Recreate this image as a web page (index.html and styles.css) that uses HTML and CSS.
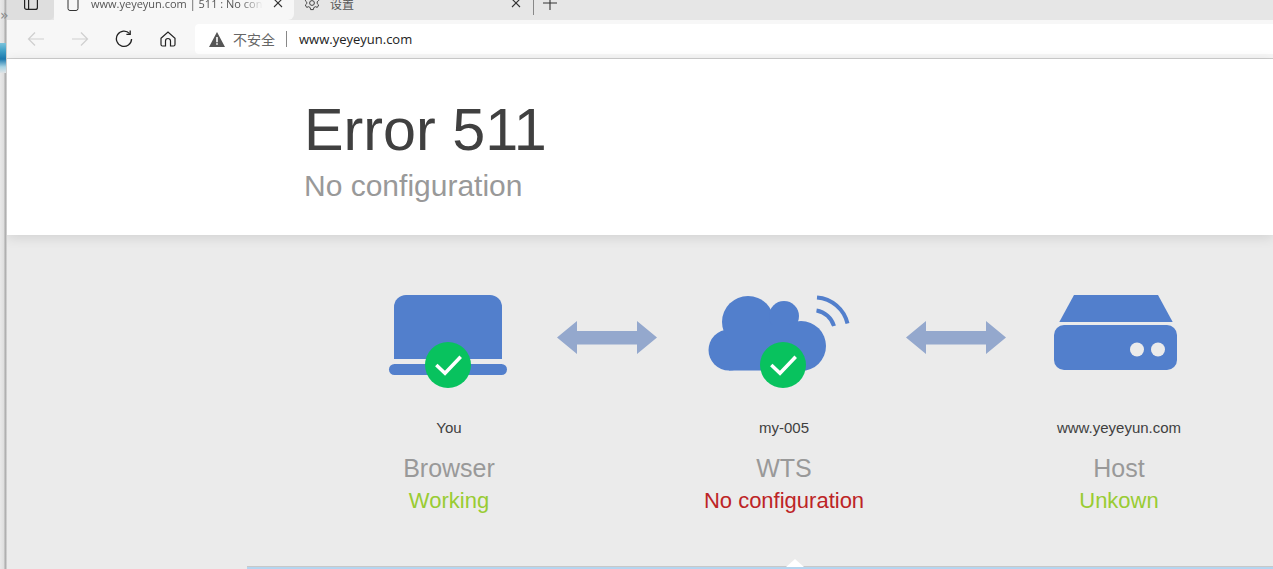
FILE: index.html
```html
<!DOCTYPE html>
<html lang="en">
<head>
    <meta charset="UTF-8">
    <meta name="viewport" content="width=device-width, initial-scale=1.0">
    <title>www.yeyeyun.com | 511 : No configuration</title>
    <link rel="stylesheet" href="styles.css">
</head>
<body>
    <div class="desk-strip">
        <span class="desk-more">»</span>
        <div class="desk-image"></div>
    </div>
    <div class="browser">
        <div class="tab-strip">
            <div class="sidebar-button">
                <svg width="14" height="14" viewBox="0 0 14 14" fill="none" stroke="#222" stroke-width="1.2"><rect x="0.6" y="0.6" width="12.8" height="12.8" rx="2"/><path d="M4.6 1v12"/></svg>
            </div>
            <div class="tab tab-active">
                <svg class="tab-icon" width="12" height="16" viewBox="0 0 12 16" fill="none" stroke="#333" stroke-width="1"><path d="M1 2.500a2 2 0 0 1 2-2h4l4 4v9a2 2 0 0 1-2 2H3a2 2 0 0 1-2-2z"/></svg>
                <span class="tab-title">www.yeyeyun.com | 511 : No configuration</span>
                <svg class="tab-close" width="10" height="10" viewBox="0 0 10 10" stroke="#333" stroke-width="1.1"><path d="M1 1l8 8M9 1l-8 8"/></svg>
            </div>
            <div class="tab tab-settings">
                <svg class="tab-icon" width="16" height="16" viewBox="0 0 16 16" fill="none" stroke="#444" stroke-width="1"><circle cx="8" cy="8" r="2.400"/><path d="M6.600 .8h2.800l.4 2 1.600.9 1.900-.7 1.400 2.400-1.500 1.400v1.800l1.500 1.400-1.400 2.400-1.900-.7-1.600.9-.4 2H6.600l-.4-2-1.600-.9-1.900.7-1.400-2.400 1.500-1.400V7.200L1.300 5.800l1.400-2.400 1.900.7 1.600-.9z"/></svg>
                <span class="tab-label">设置</span>
                <svg class="tab-close" width="10" height="10" viewBox="0 0 10 10" stroke="#333" stroke-width="1.1"><path d="M1 1l8 8M9 1l-8 8"/></svg>
            </div>
            <div class="tab-divider"></div>
            <svg class="tab-new" width="14" height="14" viewBox="0 0 14 14" stroke="#333" stroke-width="1.1"><path d="M7 0v14M0 7h14"/></svg>
        </div>

        <div class="toolbar">
            <div class="nav-button">
                <svg width="18" height="16" viewBox="0 0 18 16" fill="none" stroke="#cfcfcf" stroke-width="1.2"><path d="M17 8H1.500M8 1.500L1.500 8 8 14.500"/></svg>
            </div>
            <div class="nav-button">
                <svg width="18" height="16" viewBox="0 0 18 16" fill="none" stroke="#cfcfcf" stroke-width="1.2"><path d="M1 8h15.500M10 1.500L16.500 8 10 14.500"/></svg>
            </div>
            <div class="nav-button">
                <svg width="18" height="18" viewBox="0 0 18 18" fill="none" stroke="#222" stroke-width="1.3"><path d="M14.600 3.600A7.600 7.600 0 1 0 16.600 9"/><path d="M15.200 .6v3.800h-3.800"/></svg>
            </div>
            <div class="nav-button">
                <svg width="16" height="16" viewBox="0 0 16 16" fill="none" stroke="#222" stroke-width="1.2"><path d="M1 7.200L8 1l7 6.200v6.300a1.500 1.500 0 0 1-1.500 1.500H10.500V10a2.500 2.500 0 0 0-5 0v5H2.500A1.500 1.500 0 0 1 1 13.500z"/></svg>
            </div>
            <div class="address-bar">
                <svg class="warn-icon" width="16" height="15" viewBox="0 0 16 15"><path d="M8 0l8 15H0z" fill="#555"/><path d="M7.200 5h1.600v5.200H7.200zM7.200 11.200h1.600v1.600H7.200z" fill="#fff"/></svg>
                <span class="warn-text">不安全</span>
                <span class="address-divider"></span>
                <span class="address-url">www.yeyeyun.com</span>
            </div>
        </div>

        <div class="page">
            <header class="error-header">
                <h1>Error 511</h1>
                <h2>No configuration</h2>
            </header>

            <section class="status-row">
                <div class="status-item">
                    <svg class="status-icon" width="200" height="94" viewBox="0 0 200 94">
                        <path d="M45 64V12A12 12 0 0 1 57 0h84a12 12 0 0 1 12 12v52z" fill="#527fcc"/>
                        <rect x="40" y="69" width="118" height="11" rx="5.500" fill="#527fcc"/>
                        <circle cx="99" cy="70" r="23" fill="#08c25e"/>
                        <path d="M87.300 70l8.700 8.300 15.700-16.600" fill="none" stroke="#fff" stroke-width="3.500"/>
                    </svg>
                    <div class="status-host">You</div>
                    <div class="status-name">Browser</div>
                    <div class="status-state state-ok">Working</div>
                </div>
                <svg class="status-arrow arrow-first" width="100" height="33" viewBox="0 0 100 33"><path d="M0 16.500L20 0v10h60V0l20 16.500L80 33v-9.500H20V33z" fill="#94a8cd"/></svg>
                <div class="status-item">
                    <svg class="status-icon" width="200" height="94" viewBox="0 0 200 94">
                        <g fill="#527fcc">
                            <circle cx="45" cy="55" r="20.500"/>
                            <circle cx="64" cy="27" r="26"/>
                            <circle cx="100" cy="21" r="15"/>
                            <circle cx="117" cy="51" r="25"/>
                            <rect x="45" y="30" width="72" height="45.500"/>
                        </g>
                        <path d="M133 2.500A34 34 0 0 1 163.500 28.500M132.500 15.500A22 22 0 0 1 150 31" fill="none" stroke="#527fcc" stroke-width="4"/>
                        <circle cx="99" cy="70" r="23" fill="#08c25e"/>
                        <path d="M87.300 70l8.700 8.300 15.700-16.600" fill="none" stroke="#fff" stroke-width="3.500"/>
                    </svg>
                    <div class="status-host">my-005</div>
                    <div class="status-name">WTS</div>
                    <div class="status-state state-error">No configuration</div>
                </div>
                <svg class="status-arrow arrow-second" width="100" height="33" viewBox="0 0 100 33"><path d="M0 16.500L20 0v10h60V0l20 16.500L80 33v-9.500H20V33z" fill="#94a8cd"/></svg>
                <div class="status-item">
                    <svg class="status-icon" width="200" height="94" viewBox="0 0 200 94">
                        <path d="M55 0h84l14.700 27H40.300z" fill="#527fcc"/>
                        <rect x="35" y="30" width="123" height="45" rx="10" fill="#527fcc"/>
                        <circle cx="118" cy="54.500" r="7" fill="#ebebeb"/>
                        <circle cx="139" cy="54.500" r="7" fill="#ebebeb"/>
                    </svg>
                    <div class="status-host">www.yeyeyun.com</div>
                    <div class="status-name">Host</div>
                    <div class="status-state state-ok">Unkown</div>
                </div>
            </section>

            <div class="info-panel"></div>
        </div>
    </div>
</body>
</html>
```

FILE: styles.css
```css
html, body {
    height: 100%;
}
body {
    font-family: 'Liberation Sans', Arial, sans-serif;
    margin: 0;
    padding: 0;
    display: flex;
    overflow: hidden;
    background-color: #ebebeb;
}
.desk-strip {
    position: relative;
    z-index: 1;
    flex: 0 0 7px;
    background: linear-gradient(to right, #e9e9e9 0, #dedede 4px, #ababab 5px, #b5b5b5 6px, #e6e6e6 7px);
}
.desk-more {
    position: absolute;
    top: 7px;
    left: 0;
    font-family: 'DejaVu Sans', sans-serif;
    font-size: 14px;
    color: #888;
}
.desk-image {
    margin-top: 43px;
    height: 30px;
    width: 6px;
    background: linear-gradient(to bottom, #7cc4dc 0, #3f9fc6 8px, #1c78ad 16px, #a9d4e4 24px, #e0e4e6 30px);
}
.browser {
    flex: 1;
    min-width: 0;
    display: flex;
    flex-direction: column;
}

/* tabs, cut off at the top of the picture */
.tab-strip {
    flex: 0 0 20px;
    display: flex;
    background-color: #e6e6e6;
    overflow: hidden;
}
.sidebar-button {
    width: 47px;
    height: 6px;
    padding-bottom: 14px;
    display: flex;
    align-items: center;
    justify-content: center;
    background-color: #dedede;
    border-bottom-right-radius: 5px;
}
.tab {
    height: 6px;
    padding-bottom: 14px;
    display: flex;
    align-items: center;
    width: 240px;
    font-family: 'Open Sans', sans-serif;
    font-size: 11px;
    color: #555;
}
.tab-active {
    background-color: #f7f7f7;
    border-radius: 0 0 6px 0;
}
.tab-settings {
    width: 239px;
}
.tab-icon {
    margin-left: 10px;
    flex: none;
}
.tab-active .tab-icon {
    margin-left: 13px;
}
.tab-title {
    margin-left: 12px;
    width: 172px;
    white-space: nowrap;
    overflow: hidden;
    -webkit-mask-image: linear-gradient(to right, #000 150px, transparent 172px);
}
.tab-close {
    margin-left: auto;
    margin-right: 11px;
    flex: none;
}
.tab-settings .tab-close {
    margin-right: 12px;
}
.tab-label {
    margin-left: 10px;
    font-family: 'Noto Sans CJK SC', sans-serif;
    font-size: 12px;
}
.tab-divider {
    width: 1px;
    height: 15px;
    background-color: #888;
}
.tab-new {
    margin: -4px 0 0 9px;
}

/* address row */
.toolbar {
    flex: 0 0 39px;
    display: flex;
    align-items: center;
    padding-left: 7px;
    box-sizing: border-box;
    background-color: #f7f7f7;
    border-bottom: 1px solid #cfcfcf;
}
.nav-button {
    width: 44px;
    display: flex;
    justify-content: center;
}
.address-bar {
    flex: 1;
    height: 30px;
    margin-left: 5px;
    display: flex;
    align-items: center;
    background-color: white;
    border-radius: 4px 0 0 4px;
    font-family: 'Open Sans', sans-serif;
}
.warn-icon {
    margin-left: 14px;
}
.warn-text {
    margin-left: 8px;
    font-family: 'Noto Sans CJK SC', sans-serif;
    font-size: 14px;
    color: #666;
}
.address-divider {
    width: 1px;
    height: 16px;
    margin: 0 12px 0 11px;
    background-color: #888;
}
.address-url {
    font-size: 13px;
    color: #222;
}

/* page */
.page {
    flex: 1;
    min-height: 0;
    background-color: #ebebeb;
}
.error-header {
    position: relative;
    height: 176px;
    padding: 37px 0 0 297px;
    box-sizing: border-box;
    background-color: white;
    box-shadow: 0 2px 12px rgba(0, 0, 0, 0.12);
}
.error-header h1 {
    margin: 0;
    font-size: 59.3px;
    font-weight: normal;
    line-height: 68px;
    color: #404040;
}
.error-header h2 {
    margin: 4px 0 0;
    font-size: 30px;
    font-weight: normal;
    line-height: 36px;
    color: #999;
}
.status-row {
    display: flex;
    align-items: flex-start;
    height: 331px;
    padding: 60px 0 0 342px;
    box-sizing: border-box;
}
.status-item {
    flex: 0 0 200px;
    text-align: center;
}
.status-icon {
    display: block;
}
.status-arrow {
    flex: none;
    margin-top: 26px;
}
.arrow-first {
    margin-left: 8px;
    margin-right: 27px;
}
.arrow-second {
    margin-left: 22px;
    margin-right: 13px;
}
.status-host {
    margin-top: 30px;
    font-size: 15px;
    line-height: 17px;
    color: #404040;
}
.status-name {
    margin-top: 17px;
    font-size: 25px;
    line-height: 30px;
    color: #999;
}
.status-state {
    margin-top: 5px;
    font-size: 22px;
    line-height: 26px;
}
.state-ok {
    color: #9c3;
}
.state-error {
    color: #bd2426;
}
.info-panel {
    position: relative;
    margin-left: 240px;
    height: 20px;
    background-color: #b5d5ef;
    border-top: 1px solid #c8c8c8;
}
.info-panel::before {
    content: "";
    position: absolute;
    top: -8px;
    left: 539px;
    border-left: 9px solid transparent;
    border-right: 9px solid transparent;
    border-bottom: 8px solid white;
}
```
